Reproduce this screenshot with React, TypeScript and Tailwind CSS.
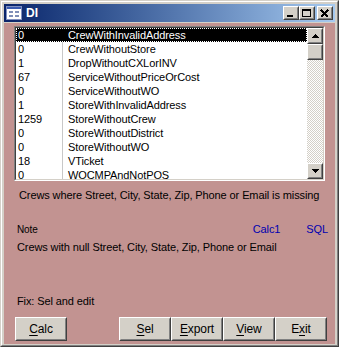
import React from "react";

const rows: [string, string][] = [
  ["0", "CrewWithInvalidAddress"],
  ["0", "CrewWithoutStore"],
  ["1", "DropWithoutCXLorINV"],
  ["67", "ServiceWithoutPriceOrCost"],
  ["0", "ServiceWithoutWO"],
  ["1", "StoreWithInvalidAddress"],
  ["1259", "StoreWithoutCrew"],
  ["0", "StoreWithoutDistrict"],
  ["0", "StoreWithoutWO"],
  ["18", "VTicket"],
  ["0", "WOCMPAndNotPOS"],
];

const font = { fontFamily: '"Liberation Sans", Arial, sans-serif' };

function Raised({ className = "", children }: { className?: string; children?: React.ReactNode }) {
  return (
    <div className={`border border-t-white border-l-white border-r-[#404040] border-b-[#404040] bg-[#d4d0c8] ${className}`}>
      <div className="flex h-full w-full items-center justify-center border border-t-[#d4d0c8] border-l-[#d4d0c8] border-r-[#808080] border-b-[#808080]">
        {children}
      </div>
    </div>
  );
}

function CapBtn({ kind }: { kind: "min" | "max" | "close" }) {
  return (
    <Raised className="h-[14px] w-[16px]">
      <svg width="10" height="9" viewBox="0 0 10 9" shapeRendering="crispEdges">
        {kind === "min" && <rect x="1" y="6" width="6" height="2" fill="#000" />}
        {kind === "max" && (
          <g fill="none" stroke="#000">
            <rect x="0.5" y="0.5" width="8" height="7" />
            <line x1="0" y1="1.5" x2="9" y2="1.5" />
          </g>
        )}
        {kind === "close" && (
          <g stroke="#000" strokeWidth="1.6">
            <line x1="1" y1="1" x2="8" y2="8" />
            <line x1="8" y1="1" x2="1" y2="8" />
          </g>
        )}
      </svg>
    </Raised>
  );
}

function Btn({ label, u, className = "" }: { label: string; u: number; className?: string }) {
  return (
    <Raised className={`h-[24px] w-[52px] ${className}`}>
      <span className="text-[12px] text-black">
        {label.slice(0, u)}
        <span className="underline underline-offset-2">{label[u]}</span>
        {label.slice(u + 1)}
      </span>
    </Raised>
  );
}

function Arrow({ up }: { up?: boolean }) {
  return (
    <Raised className="h-[16px] w-[16px]">
      <svg width="7" height="4" viewBox="0 0 7 4" shapeRendering="crispEdges">
        <path d={up ? "M3.5 0 L7 4 L0 4 Z" : "M0 0 L7 0 L3.5 4 Z"} fill="#000" />
      </svg>
    </Raised>
  );
}

export default function App() {
  return (
    <div style={font} className="h-[347px] w-[339px] overflow-hidden border border-t-[#d4d0c8] border-l-[#d4d0c8] border-r-[#404040] border-b-[#404040] bg-[#d4d0c8]">
      <div className="flex h-full flex-col border border-t-white border-l-white border-r-[#808080] border-b-[#808080] p-[2px] pb-[1px]">
        {/* title bar */}
        <div className="flex h-[18px] items-center bg-gradient-to-r from-[#0a246a] to-[#a6caf0] pl-[2px] pr-[2px]">
          <svg width="16" height="14" viewBox="0 0 16 14" shapeRendering="crispEdges">
            <rect x="0.5" y="0.5" width="15" height="13" fill="#fff" stroke="#8090c0" />
            <rect x="1" y="1" width="14" height="2" fill="#3a5bb0" />
            <rect x="3" y="5" width="4" height="2" fill="#7f8fb8" />
            <rect x="9" y="5" width="4" height="2" fill="#7f8fb8" />
            <rect x="3" y="9" width="4" height="2" fill="#7f8fb8" />
            <rect x="9" y="9" width="4" height="2" fill="#7f8fb8" />
          </svg>
          <span className="ml-[4px] text-[12px] font-bold text-white">DI</span>
          <div className="ml-auto flex items-center">
            <CapBtn kind="min" />
            <CapBtn kind="max" />
            <div className="w-[2px]" />
            <CapBtn kind="close" />
          </div>
        </div>
        {/* body */}
        <div className="mt-[1px] flex-1 bg-[#c29391] pl-[10px] text-[11px] tracking-[-0.1px] text-black">
          <div className="mt-[3px] flex h-[155px] w-[311px] border border-t-[#808080] border-l-[#808080] border-r-white border-b-white">
            <div className="flex flex-1 border border-t-[#404040] border-l-[#404040] border-r-[#d4d0c8] border-b-[#d4d0c8] bg-white">
              <div className="flex-1 overflow-hidden">
                {rows.map(([n, name], i) => (
                  <div
                    key={name}
                    className={`flex h-[14px] items-center leading-[14px] ${
                      i === 0 ? "bg-black text-white outline outline-1 -outline-offset-1 outline-dotted outline-white" : ""
                    }`}
                  >
                    <div className={`h-full w-[47px] pl-[2px] ${i === 0 ? "" : "border-r border-[#c8c8c8]"}`}>{n}</div>
                    <div className="pl-[5px]">{name}</div>
                  </div>
                ))}
              </div>
              <div className="flex w-[16px] flex-col bg-[repeating-conic-gradient(#d4d0c8_0_25%,#ffffff_0_50%)] bg-[length:2px_2px]">
                <Arrow up />
                <Raised className="h-[16px] w-[16px]" />
                <div className="flex-1" />
                <Arrow />
              </div>
            </div>
          </div>
          <div className="mt-[8px] h-[13px] pl-[5px] leading-[13px]">
            Crews where Street, City, State, Zip, Phone or Email is missing
          </div>
          <div className="mt-[20px] flex h-[14px] items-center">
            <span className="pl-[3px] text-[10px]">Note</span>
            <span className="ml-[215px] text-[#0000b0]">Calc1</span>
            <span className="ml-[26px] text-[#0000b0]">SQL</span>
          </div>
          <div className="mt-[5px] h-[13px] pl-[3px] leading-[13px]">
            Crews with null Street, City, State, Zip, Phone or Email
          </div>
          <div className="mt-[41px] h-[13px] pl-[3px] leading-[13px]">Fix: Sel and edit</div>
          <div className="mt-[9px] flex">
            <Btn label="Calc" u={0} className="ml-[1px]" />
            <Btn label="Sel" u={0} className="ml-[52px]" />
            <Btn label="Export" u={0} />
            <Btn label="View" u={0} />
            <Btn label="Exit" u={1} />
          </div>
        </div>
      </div>
    </div>
  );
}
